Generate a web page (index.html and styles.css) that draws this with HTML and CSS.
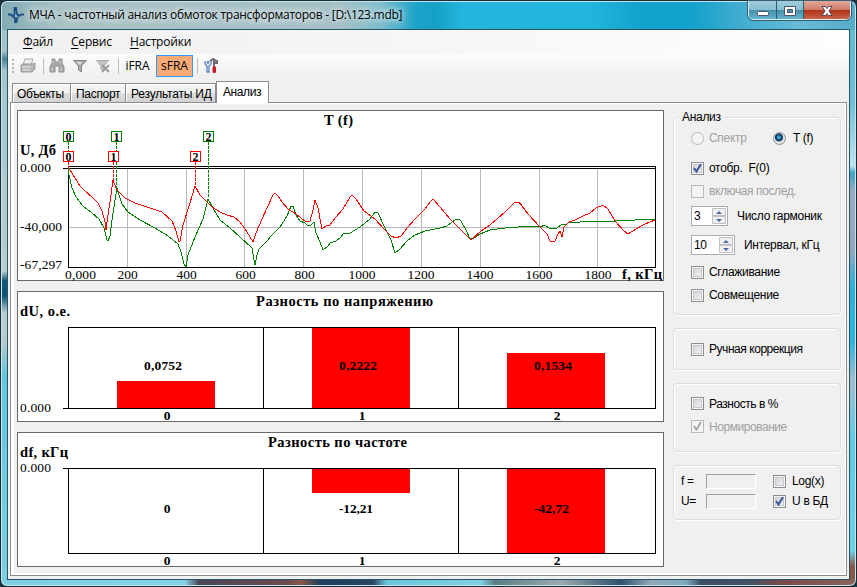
FILE: index.html
```html
<!DOCTYPE html>
<html lang="ru">
<head>
    <meta charset="UTF-8">
    <title>МЧА - частотный анализ обмоток трансформаторов</title>
    <link rel="stylesheet" href="styles.css">
</head>
<body>
    <div class="window">
        <header class="titlebar">
            <svg class="app-icon" width="16" height="16" viewBox="0 0 16 16"><path d="M0 7.500h3l2 2L6.500 7V1l1.500 0 1 6 2 2 2-1.500h3M4.500 9.500L7 11v4h1.500l1-5" fill="none" stroke="#1d4f86" stroke-width="1.800"/></svg>
            <span class="title">МЧА - частотный анализ обмоток трансформаторов - [D:\123.mdb]</span>
            <div class="controls">
                <span class="ctl ctl-min"><svg width="12" height="13"><rect x=".5" y="7.500" width="11" height="4" rx="1" fill="#fff" stroke="#4c5367"/></svg></span>
                <span class="ctl ctl-max"><svg width="12" height="13"><path d="M.5 2.500h11v9H.5zM3.500 5.500v3h5v-3z" fill="#fff" fill-rule="evenodd" stroke="#4c5367"/></svg></span>
                <span class="ctl ctl-close"><svg width="12" height="13"><path d="M1 2.500h3.500L6 4.500l1.500-2H11L8 7l3 4.500H7.500L6 9.500l-1.500 2H1L4 7z" fill="#fff" stroke="#5b4654"/></svg></span>
            </div>
        </header>

        <main class="client">
            <nav class="menu">
                <span class="m1"><u>Ф</u>айл</span>
                <span class="m2"><u>С</u>ервис</span>
                <span class="m3"><u>Н</u>астройки</span>
            </nav>

            <div class="toolbar">
                <i class="grip"></i>
                <svg class="ico-print" width="16" height="16" viewBox="0 0 16 16"><path d="M5 1h8l-2 6H3z" fill="#eee" stroke="#aaa"/><path d="M1 7l2-1h10l2-1v6l-3 3H1z" fill="#b5b5b5" stroke="#999"/><path d="M2 9h9M3 12h7" stroke="#eee"/></svg>
                <i class="sep"></i>
                <svg class="ico-find" width="16" height="16" viewBox="0 0 16 16"><path d="M3 1h3v3h4V1h3v4l2 4v5h-5V8H6v6H1V9l2-4z" fill="#aaa" stroke="#8f8f8f"/><path d="M3 10v3M12 10v3M4 3v2M11 3v2" stroke="#ddd"/></svg>
                <svg class="ico-filter" width="16" height="16" viewBox="0 0 16 16"><path d="M1.500 2.500h13L9.500 8v6l-3-2V8z" fill="#aaa" stroke="#858585"/><path d="M4 4h6L8 7z" fill="#ddd"/></svg>
                <svg class="ico-clear" width="16" height="16" viewBox="0 0 16 16"><path d="M1.500 2.500h12L9 8v5l-3-2V8z" fill="#c5c5c5" stroke="#aaa"/><path d="M7 7l7 7M14 7l-7 7" stroke="#999" stroke-width="1.800"/></svg>
                <i class="sep"></i>
                <span class="tool">iFRA</span>
                <span class="tool active">sFRA</span>
                <i class="sep"></i>
                <svg class="ico-setup" width="14" height="16" viewBox="0 0 14 16"><path d="M1 3v3l2 2v6h2V8l2-2V3M3.500 3v2h1V3" fill="none" stroke="#5f86c5" stroke-width="1.400"/><path d="M6 3l3-2 4 2v2h-2l-1-1v4" fill="none" stroke="#6a6a70" stroke-width="2"/><rect x="8.500" y="8" width="3.500" height="7" rx="1.500" fill="#c61c25"/></svg>
            </div>

            <div class="tabs">
                <span class="tab t1">Объекты</span>
                <span class="tab t2">Паспорт</span>
                <span class="tab t3">Результаты ИД</span>
                <span class="tab t4 selected">Анализ</span>
            </div>

            <section class="page">
                <div class="charts">
                    <svg class="chart" width="647" height="171" viewBox="17 110 647 171">
                        <rect class="panel" x="17.500" y="110.500" width="646" height="170"/>
                        <path class="grid" d="M127.500 169v98M186.500 169v98M244.500 169v98M303.500 169v98M362.500 169v98M421.500 169v98M480.500 169v98M539.500 169v98M597.500 169v98M69 227.500h586"/>
                        <path class="axis" d="M68 166.500h588M63 168.500h593M68.500 166v102M655.500 166v102M68 267.500h588"/>
                        <polyline class="curve green" points="68,166 69,175 72,188 76,197 83,206 92,213 99,219 104,228 107,240 108,241 110,236 112,220 115,200 117,188 119,195 122,204 128,212 140,220 155,228 168,236 178,244 181,252 184,264 186,267 188,255 195,237 203,219 208,199 213,208 220,220 230,228 240,237 252,248 254,260 255,265 257,255 259,249 268,240 270,237 280,227 287,216 291,206 293,206 296,215 300,221 305,223 308,226 311,225 314,222 316,233 320,242 323,250 328,246 330,243 336,241 340,238 344,233 350,233 360,227 370,219 375,212 378,213 384,226 391,240 395,253 400,249 407,241 415,235 425,231 440,228 447,226 455,220 459,219 461,221 466,230 470,239 474,238 480,234 490,230 505,228 518,227 530,226 540,227 545,225 550,229 557,228 562,224 566,225 569,222 580,222 595,221 615,221 655,219"/>
                        <polyline class="curve red" points="68,166 70,170 75,178 80,186 85,191 92,197 98,203 102,211 105,222 106,230 108,215 111,195 113,180 116,188 118,191 125,198 135,203 150,208 162,212 172,221 176,231 179,242 180,241 183,225 190,203 195,186 200,195 206,201 212,207 220,212 227,215 234,217 240,222 247,232 253,242 256,233 262,219 268,206 273,195 275,193 278,196 282,202 288,209 296,214 306,222 310,221 313,210 315,200 318,208 321,224 322,229 326,226 330,225 336,217 343,209 350,197 352,195 356,199 364,211 375,219 385,230 391,236 396,238 401,236 408,227 415,219 425,209 431,201 433,199 440,207 450,219 462,231 471,240 481,231 490,225 505,212 515,202 519,202 528,214 540,227 547,234 550,241 555,241 558,234 560,231 562,237 564,227 569,222 575,220 583,216 590,213 596,208 603,205 608,209 615,221 624,231 628,234 636,229 645,224 655,220"/>
                        <path class="marker green" d="M68.500 142v24M116.500 142v48M208.500 142v56"/>
                        <path class="marker red" d="M68.500 162v5M113.500 162v20M195.500 162v24"/>
                        <g class="flag green">
                            <rect x="63.500" y="131.500" width="10" height="10"/><text x="68.500" y="141">0</text>
                            <rect x="111.500" y="131.500" width="10" height="10"/><text x="116.500" y="141">1</text>
                            <rect x="203.500" y="131.500" width="10" height="10"/><text x="208.500" y="141">2</text>
                        </g>
                        <g class="flag red">
                            <rect x="63.500" y="151.500" width="10" height="10"/><text x="68.500" y="161">0</text>
                            <rect x="108.500" y="151.500" width="10" height="10"/><text x="113.500" y="161">1</text>
                            <rect x="190.500" y="151.500" width="10" height="10"/><text x="195.500" y="161">2</text>
                        </g>
                        <text class="head" x="324" y="125" textLength="29">T (f)</text>
                        <text class="head" x="20" y="155" textLength="36">U, Дб</text>
                        <text class="num" x="20" y="172" textLength="31">0.000</text>
                        <text class="num" x="20" y="231" textLength="42">-40,000</text>
                        <text class="num" x="20" y="269" textLength="42">-67,297</text>
                        <text class="num" x="65" y="279" textLength="31">0,000</text>
                        <text class="num mid" x="127.500" y="279">200</text>
                        <text class="num mid" x="186.500" y="279">400</text>
                        <text class="num mid" x="245.500" y="279">600</text>
                        <text class="num mid" x="304.500" y="279">800</text>
                        <text class="num mid" x="362" y="279">1000</text>
                        <text class="num mid" x="421" y="279">1200</text>
                        <text class="num mid" x="480" y="279">1400</text>
                        <text class="num mid" x="539" y="279">1600</text>
                        <text class="num mid" x="598" y="279">1800</text>
                        <text class="head" x="622" y="279" textLength="40">f, кГц</text>
                    </svg>

                    <svg class="chart" width="647" height="131" viewBox="17 291 647 131">
                        <rect class="panel" x="17.500" y="291.500" width="646" height="130"/>
                        <path class="bar" d="M117 381h98v27h-98zM312 328h98v80h-98zM507 353h98v55h-98z"/>
                        <path class="axis" d="M68 327.500h588M63 408.500h593M68.500 327v82M263.500 327v82M458.500 327v82M655.500 327v82"/>
                        <text class="head" x="256" y="306" textLength="177">Разность по напряжению</text>
                        <text class="head" x="20" y="316" textLength="50">dU, о.е.</text>
                        <text class="num" x="20" y="412" textLength="31">0.000</text>
                        <text class="val" x="144" y="370" textLength="38">0,0752</text>
                        <text class="val" x="339" y="370" textLength="38">0,2222</text>
                        <text class="val" x="534" y="370" textLength="38">0,1534</text>
                        <text class="val mid" x="167" y="420">0</text>
                        <text class="val mid" x="362" y="420">1</text>
                        <text class="val mid" x="557" y="420">2</text>
                    </svg>

                    <svg class="chart" width="647" height="135" viewBox="17 432 647 135">
                        <rect class="panel" x="17.500" y="432.500" width="646" height="134"/>
                        <path class="bar" d="M312 469h98v24h-98zM507 469h98v84h-98z"/>
                        <path class="axis" d="M63 468.500h593M68 553.500h588M68.500 468v86M263.500 468v86M458.500 468v86M655.500 468v86"/>
                        <text class="head" x="268" y="447" textLength="139">Разность по частоте</text>
                        <text class="head" x="20" y="457" textLength="48">df, кГц</text>
                        <text class="num" x="20" y="472" textLength="31">0.000</text>
                        <text class="val mid" x="167" y="513">0</text>
                        <text class="val" x="339" y="513" textLength="34">-12,21</text>
                        <text class="val" x="534" y="513" textLength="35">-42,72</text>
                        <text class="val mid" x="167" y="565">0</text>
                        <text class="val mid" x="362" y="565">1</text>
                        <text class="val mid" x="557" y="565">2</text>
                    </svg>
                </div>

                <aside class="options">
                    <div class="group g-analysis">
                        <span class="legend">Анализ</span>
                        <div class="row">
                            <label class="opt off w82"><i class="radio"></i>Спектр</label>
                            <label class="opt radio-opt"><i class="radio on"></i>T (f)</label>
                        </div>
                        <label class="opt"><i class="box"><svg class="tick" width="9" height="9"><path d="M1 4l2.500 3.500L8 0"/></svg></i><span class="pre">отобр.  F(0)</span></label>
                        <label class="opt off wide"><i class="box"></i>включая послед.</label>
                        <div class="row">
                            <span class="spin s1">3<svg width="15" height="16"><path class="spin-btn" d="M.5.5h13v7H.5zM.5 8.500h13v7H.5z"/><path class="spin-arrow" d="M4 6l3-3 3 3zM4 11h6l-3 3z"/></svg></span>
                            <span class="lbl">Число гармоник</span>
                        </div>
                        <div class="row">
                            <span class="spin s2">10<svg width="15" height="16"><path class="spin-btn" d="M.5.5h13v7H.5zM.5 8.500h13v7H.5z"/><path class="spin-arrow" d="M4 6l3-3 3 3zM4 11h6l-3 3z"/></svg></span>
                            <span class="lbl">Интервал, кГц</span>
                        </div>
                        <label class="opt"><i class="box"></i>Сглаживание</label>
                        <label class="opt"><i class="box"></i>Совмещение</label>
                    </div>

                    <div class="group g-manual">
                        <label class="opt"><i class="box"></i>Ручная коррекция</label>
                    </div>

                    <div class="group g-diff">
                        <label class="opt"><i class="box"></i>Разность в %</label>
                        <label class="opt off"><i class="box"><svg class="tick" width="9" height="9"><path d="M1 4l2.500 3.500L8 0"/></svg></i>Нормирование</label>
                    </div>

                    <div class="group g-cursor">
                        <span class="name">f =</span><i class="field"></i>
                        <label class="opt"><i class="box"></i>Log(x)</label>
                        <span class="name">U=</span><i class="field"></i>
                        <label class="opt"><i class="box"><svg class="tick" width="9" height="9"><path d="M1 4l2.500 3.500L8 0"/></svg></i>U в БД</label>
                    </div>
                </aside>
            </section>
        </main>
    </div>
</body>
</html>
```
FILE: styles.css
```css
* {
    box-sizing: border-box;
}

body {
    margin: 0;
    background: #16343f;
    color: #000;
    font: 12px "Liberation Sans", Arial, sans-serif;
}

.window {
    width: 857px;
    height: 587px;
    padding: 1px;
    border: 1px solid #1c2b33;
    border-radius: 7px;
    background:
        linear-gradient(90deg, #7ccfe3 0, #83d2e6 184px, #4c4556 198px, #6d4a4b 285px, #8a5747 300px, #1f3c5d 320px, #2b4562 372px, #6fc4dd 386px, #7dcfe5 480px, #5c7d84 494px, #9daaad 560px, #30506c 620px, #91a9b8 650px, #7ea8bd 685px, #3f4f66 700px, #455064 750px, #7a4a45 780px, #8c6259 100%) 0 100% / 100% 8px no-repeat,
        linear-gradient(90deg, #83acb5 0, #a9c2c5 60px, #a4bfc6 340px, #7fbdcd 380px, #1ca4c9 415px, #16a0c6 435px, #24b5dc 460px, #23b6dc 590px, #12a2cb 640px, #12a2cb 690px, #43acd0 740px, #67bbd7 800px, #55abc9 100%) 0 0 / 100% 29px no-repeat,
        linear-gradient(180deg, #5fb8cf 0, #70bfd4 100px, #c0e3ed 165px, #3e9fc2 172px, #9aabc0 190px, #93a6bc 250px, #2fb0d9 285px, #30b4dc 340px, #a3bdcc 380px, #5ecbe4 440px, #70d0e5 550px, #8a5747 565px) 100% 0 / 8px 100% no-repeat,
        linear-gradient(180deg, #a5c2c8 0, #a5c2c8 50px, #4e8298 58px, #a7c6cc 70px, #b7cdd0 270px, #0f5579 280px, #0f5579 295px, #c0cdce 312px, #bac9ca 340px, #66c6dc 375px, #7dcfe2 100%);
    box-shadow: inset 0 0 0 1px #c3e7ee;
}

.titlebar {
    display: flex;
    height: 27px;
    padding-left: 6px;
}

.app-icon {
    margin-top: 5px;
}

.title {
    flex: 1;
    margin-left: 5px;
    font: 12px/26px "Open Sans", "Noto Sans", sans-serif;
    letter-spacing: -.26px;
    text-shadow: 0 0 6px #fff, 0 0 10px #fff;
    white-space: nowrap;
}

.controls {
    display: flex;
    width: 103px;
    height: 19px;
    margin-right: 4px;
    margin-top: -1px;
    border: 1px solid #d5eff7;
    border-top: 0;
    border-radius: 0 0 5px 5px;
    overflow: hidden;
    outline: 1px solid #346071;
}

.ctl {
    display: flex;
    justify-content: center;
    align-items: center;
    width: 28px;
    border-right: 1px solid #285e72;
    background: linear-gradient(#a2ccdc 0, #88bfd3 48%, #438da9 50%, #67b4cd 100%);
}

.ctl-max {
    width: 27px;
}

.ctl-close {
    flex: 1;
    border-right: 0;
    background: linear-gradient(#e2a99a 0, #cf7c6a 48%, #ac3219 50%, #cb6345 100%);
}

.client {
    display: flex;
    flex-direction: column;
    width: 843px;
    height: 551px;
    margin-left: 5px;
    border: 1px solid #245766;
    background: #f0f0f0;
}

.menu {
    display: flex;
    height: 24px;
    padding-left: 15px;
    background: linear-gradient(90deg, #f0f0f0, #fdfdfd);
    font: 12px/24px "Open Sans", "Noto Sans", sans-serif;
    letter-spacing: -.2px;
}

.menu u {
    text-underline-offset: 2px;
}

.m1 {
    width: 48px;
}

.m2 {
    width: 59px;
}

.toolbar {
    display: flex;
    align-items: center;
    height: 25px;
    padding-left: 4px;
    background: linear-gradient(#fcfcfc, #efefef);
}

.grip {
    width: 2px;
    height: 14px;
    margin-right: 6px;
    background: repeating-linear-gradient(#b5b5b5 0 2px, transparent 2px 4px);
}

.sep {
    width: 1px;
    height: 16px;
    background: #bdbdbd;
}

.ico-print {
    margin-right: 7px;
}

.ico-find {
    margin-left: 5px;
}

.ico-filter {
    margin-left: 7px;
}

.ico-clear {
    margin: 0 7px;
}

.tool {
    width: 37px;
    height: 22px;
    border: 1px solid transparent;
    font: 12px/19px "Open Sans", "Noto Sans", sans-serif;
    text-align: center;
}

.tool.active {
    border-color: #3399ff;
    background: #f8ab77;
}

.tool + .sep {
    margin-left: 4px;
}

.ico-setup {
    margin-left: 6px;
}

.tabs {
    display: flex;
    align-items: flex-end;
    height: 24px;
    padding-left: 4px;
}

.tab {
    height: 19px;
    padding-left: 5px;
    border: 1px solid #898c95;
    border-left-width: 0;
    border-bottom: 0;
    background: linear-gradient(#f3f3f3 50%, #dedede 50%, #d2d2d2);
    line-height: 20px;
    white-space: nowrap;
    box-shadow: inset 1px 1px #fff;
}

.t1 {
    width: 59px;
    padding-left: 4px;
    border-left-width: 1px;
    letter-spacing: -.4px;
}

.t2 {
    width: 55px;
    letter-spacing: -.3px;
}

.t3 {
    width: 90px;
    letter-spacing: -.2px;
}

.tab.selected {
    position: relative;
    z-index: 1;
    width: 53px;
    height: 22px;
    margin-bottom: -1px;
    padding-left: 6px;
    border-left-width: 1px;
    background: #fff;
    line-height: 20px;
    letter-spacing: -.4px;
}

.page {
    display: flex;
    flex: 1;
    margin: 0 2px 3px;
    padding: 7px 4px 8px 6px;
    border: 1px solid #898c95;
    background: #f0f0f0;
    box-shadow: inset 3px 1px #fff, inset -1px -2px #fff;
}

.charts {
    display: flex;
    flex-direction: column;
    gap: 10px;
    width: 647px;
}

.chart {
    display: block;
    font-family: "Liberation Serif", "Times New Roman", serif;
}

.panel {
    fill: #fff;
    stroke: #696969;
}

.grid,
.axis,
.marker,
.curve {
    fill: none;
    shape-rendering: crispEdges;
}

.grid {
    stroke: #b8b8b8;
}

.axis {
    stroke: #000;
}

.bar {
    fill: #f00;
}

.red {
    stroke: #f00;
}

.green {
    stroke: #008000;
}

.marker {
    stroke-dasharray: 3 1;
}

.flag rect {
    fill: #fff;
}

.flag text {
    fill: #000;
    stroke: none;
    font-size: 12px;
    font-weight: bold;
    text-anchor: middle;
}

.head {
    font-size: 14.500px;
    font-weight: bold;
}

.num {
    font-size: 13.500px;
}

.val {
    font-size: 13.500px;
    font-weight: bold;
}

.mid {
    text-anchor: middle;
}

.options {
    width: 168px;
    margin-left: 9px;
    padding-top: 7px;
    letter-spacing: -.3px;
}

.group {
    display: grid;
    padding-left: 17px;
    border: 1px solid #d5dfe5;
    border-radius: 4px;
    box-shadow: inset 1px 1px #fff, 1px 1px #fff;
    align-items: center;
    white-space: nowrap;
}

.g-analysis {
    position: relative;
    height: 198px;
    padding-top: 6px;
    grid-template-rows: 28px 32px 14px 36px 22px 32px 14px;
}

.legend {
    position: absolute;
    top: -8px;
    left: 5px;
    padding: 0 3px;
    background: #f0f0f0;
}

.g-manual {
    height: 42px;
    margin-top: 13px;
}

.g-manual .opt {
    letter-spacing: -.45px;
}

.g-diff {
    height: 69px;
    margin-top: 13px;
    padding-top: 8px;
    grid-template-rows: 23px 23px;
}

.g-diff .opt {
    letter-spacing: -.45px;
}

.g-cursor {
    height: 55px;
    margin-top: 13px;
    padding: 5px 0 0 7px;
    grid-template-columns: 25px 67px 1fr;
    grid-template-rows: 20px 20px;
}

.row,
.opt {
    display: flex;
    align-items: center;
}

.off {
    color: #a0a0a0;
}

.wide {
    letter-spacing: -.4px;
}

.w82 {
    width: 82px;
}

.radio-opt .radio {
    margin-right: 7px;
}

.g-cursor .box {
    margin-right: 6px;
}

.pre {
    white-space: pre;
}

.box,
.radio {
    display: flex;
    justify-content: center;
    align-items: center;
    width: 13px;
    height: 13px;
    margin-right: 5px;
    border: 1px solid #8e8f8f;
    background: linear-gradient(135deg, #cbcfd5, #f6f6f6);
    box-shadow: inset 0 0 0 1px #f4f4f4, inset 0 0 0 2px #c5c9cf;
}

.radio {
    border-radius: 50%;
}

.radio.on {
    background: radial-gradient(circle at 45% 40%, #6fd5f5 0, #1a6c9c 2px, #0c2c4c 3.500px, #e2e5e8 4.500px);
    box-shadow: none;
}

.off .box,
.off .radio {
    border-color: #b9b9b9;
    background: #f4f4f4;
    box-shadow: none;
}

.tick {
    fill: none;
    stroke: #3d539c;
    stroke-width: 2;
}

.off .tick {
    stroke: #a8a8a8;
}

.spin {
    display: flex;
    justify-content: space-between;
    align-items: center;
    height: 20px;
    padding-left: 2px;
    border: 1px solid #abadb3;
    background: #fff;
}

.s1 {
    width: 37px;
    margin-right: 9px;
}

.s2 {
    width: 44px;
    margin-right: 9px;
}

.spin-btn {
    fill: #f0f0f0;
    stroke: #bfc1c7;
}

.spin-arrow {
    fill: #5067a5;
}

.field {
    width: 50px;
    height: 15px;
    border: 1px solid #a0a0a0;
    border-right-color: #fff;
    border-bottom-color: #fff;
}
```
